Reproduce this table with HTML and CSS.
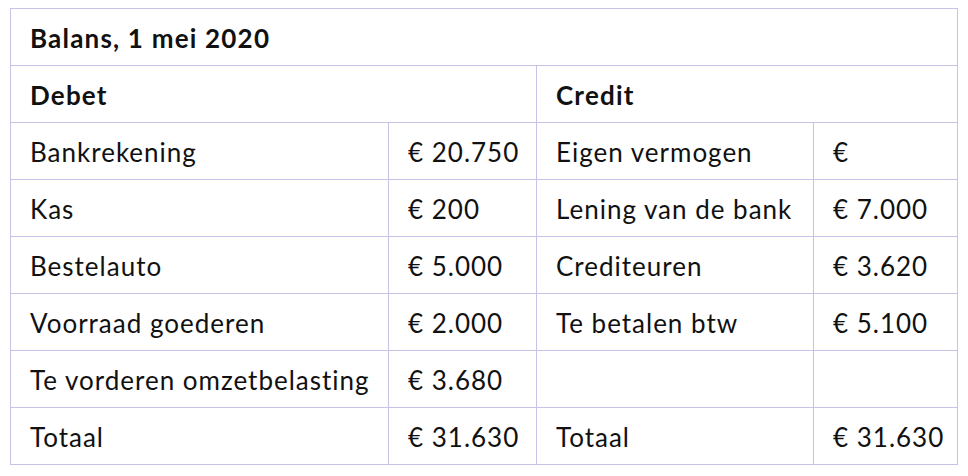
FILE: index.html
```html
<!DOCTYPE html>
<html lang="nl">
<head>
<meta charset="utf-8">
<title>Balans</title>
<link rel="stylesheet" href="styles.css">
</head>
<body>
<table class="balans">
  <colgroup>
    <col class="c1"><col class="c2"><col class="c3"><col class="c4">
  </colgroup>
  <tr><th colspan="4">Balans, 1 mei 2020</th></tr>
  <tr><th colspan="2">Debet</th><th colspan="2">Credit</th></tr>
  <tr><td>Bankrekening</td><td>€ 20.750</td><td>Eigen vermogen</td><td>€</td></tr>
  <tr><td>Kas</td><td>€ 200</td><td>Lening van de bank</td><td>€ 7.000</td></tr>
  <tr><td>Bestelauto</td><td>€ 5.000</td><td>Crediteuren</td><td>€ 3.620</td></tr>
  <tr><td>Voorraad goederen</td><td>€ 2.000</td><td>Te betalen btw</td><td>€ 5.100</td></tr>
  <tr><td>Te vorderen omzetbelasting</td><td>€ 3.680</td><td></td><td></td></tr>
  <tr><td>Totaal</td><td>€ 31.630</td><td>Totaal</td><td>€ 31.630</td></tr>
</table>
</body>
</html>
```
FILE: styles.css
```css
html, body { background: #fff; }
body {
  margin: 8px 0 0 10px;
  font-family: "Lato", "Liberation Sans", sans-serif;
  color: #111;
}
.balans {
  border-collapse: collapse;
  table-layout: fixed;
  width: 947px;
}
.c1 { width: 378px; }
.c2 { width: 148px; }
.c3 { width: 277px; }
.c4 { width: 144px; }
.balans th, .balans td {
  border: 1px solid #c9c2e6;
  height: 55px;
  padding: 1px 0 0 19px;
  text-align: left;
  vertical-align: middle;
  font-size: 26px;
  line-height: 30px;
  letter-spacing: 1px;
  white-space: nowrap;
}
.balans th { font-weight: 700; letter-spacing: 1.2px; }
.balans td { font-weight: 400; }
```
